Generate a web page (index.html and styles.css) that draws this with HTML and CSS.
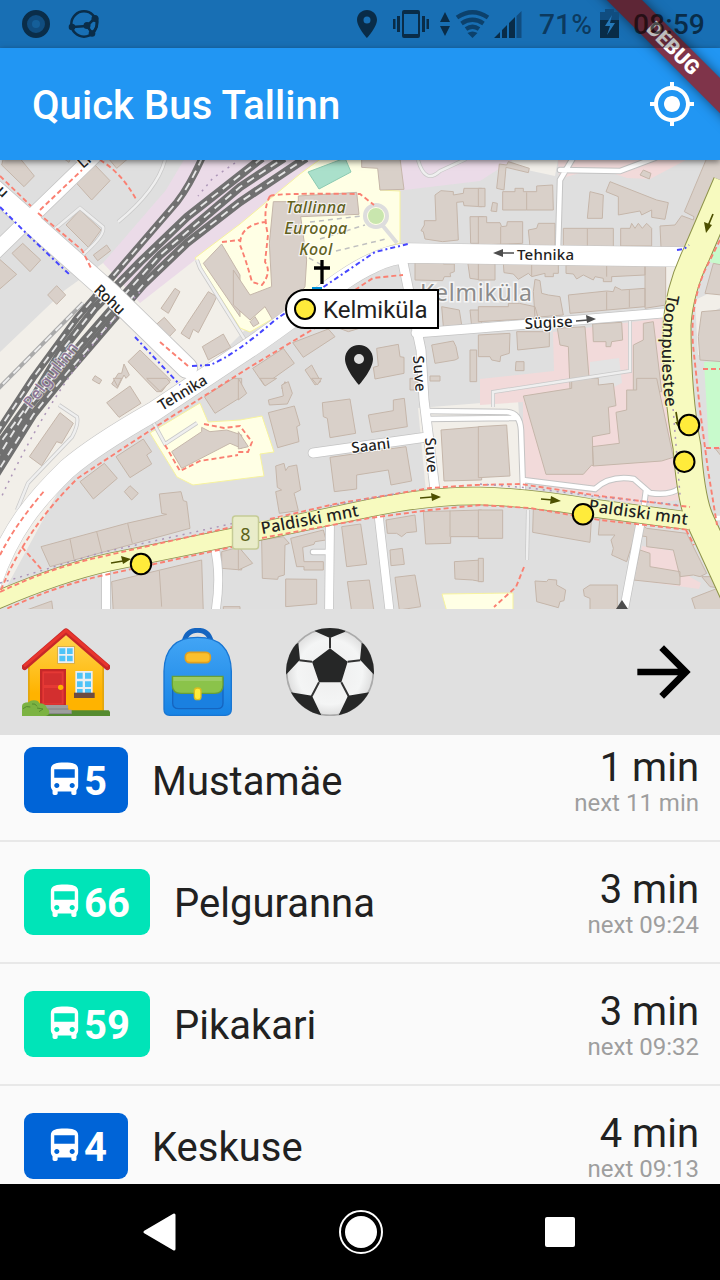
FILE: index.html
```html
<!DOCTYPE html>
<html lang="en">
<head>
<meta charset="utf-8">
<title>Quick Bus Tallinn</title>
<link rel="stylesheet" href="styles.css">
</head>
<body>
<div class="phone">
  <div class="status">
    <svg class="status-left" width="102" height="48" viewBox="0 0 102 48">
      <circle cx="36" cy="24" r="11.500" fill="#104d80" stroke="#0a2d49" stroke-width="5"/>
      <circle cx="36" cy="24" r="4" fill="#155f99"/>
      <g fill="none" stroke="#0a2d49" stroke-width="2.500"><circle cx="84" cy="24" r="12.700"/><path d="M72 27l15-1 8-8M87 26l5 7M97 18q2 9-5 15"/></g>
      <g fill="#0a2d49"><circle cx="72" cy="27" r="3.300"/><circle cx="87" cy="25.500" r="3.500"/><circle cx="95" cy="18.500" r="3.500"/><circle cx="92" cy="33.500" r="3.300"/></g>
    </svg>
    <svg class="status-mid" width="180" height="48" viewBox="350 0 180 48">
      <g fill="#000" fill-opacity=".6">
        <path fill-rule="evenodd" d="M367 10c-5.500 0-10 4.300-10 9.700 0 7.300 10 18.300 10 18.300s10-11 10-18.300c0-5.400-4.500-9.700-10-9.700zm0 13.500a3.500 3.500 0 110-7 3.500 3.500 0 010 7z"/>
        <path fill-rule="evenodd" d="M404 10h14q2 0 2 2v24q0 2-2 2h-14q-2 0-2-2V12q0-2 2-2zm0 4v20h14V14z"/>
        <path d="M393 19h2.500v10H393zM397 16h3v16h-3zM422 16h3v16h-3zM426.500 19h2.500v10h-2.500zM440 22l5-10 5 10zM440 26h10l-5 10z"/>
        <path d="M494 38l6-6v6zM502 30l5-5v13h-5zM509 23l6-6v21h-6z"/>
      </g>
      <path d="M516.500 16l5-5v27h-5z" fill="#104d80"/>
      <g fill="none" stroke="#0c416c" stroke-width="4.300"><path d="M457 17.500q15.500-10.500 31 0M461.500 23.500q11-7.500 22 0M466 29q6.500-4.500 13 0"/></g><path d="M467.500 33q5-3 10 0l-5 5z" fill="#0c416c"/>
    </svg>
    <span class="battery">71%</span>
    <svg class="status-bat" width="20" height="48" viewBox="0 0 20 48"><path d="M0 12h5V9h9v3h5v8H0z" fill="#104d80"/><path d="M0 20h19v18H0z" fill="#082c48"/><path d="M12 15L5 26h5L7 35l8-12h-5z" fill="#2579b9"/></svg>
    <span class="clock">08:59</span>
  </div>

  <header class="appbar">
    <h1>Quick Bus Tallinn</h1>
    <svg width="48" height="48" viewBox="0 0 24 24" fill="#fff"><path d="M12 8c-2.210 0-4 1.790-4 4s1.790 4 4 4 4-1.790 4-4-1.790-4-4-4zm8.940 3c-.46-4.170-3.770-7.480-7.940-7.940V1h-2v2.060C6.830 3.520 3.520 6.830 3.060 11H1v2h2.060c.46 4.170 3.770 7.480 7.940 7.940V23h2v-2.060c4.170-.46 7.480-3.770 7.940-7.940H23v-2h-2.060zM12 19c-3.870 0-7-3.130-7-7s3.130-7 7-7 7 3.130 7 7-3.130 7-7 7z"/></svg>
  </header>
  <div class="ribbon-clip"><div class="ribbon">DEBUG</div></div>

  <main class="map">
    <svg class="tiles" width="720" height="449" viewBox="0 160 720 449">
      <defs>
        <path id="tehnika" d="M-8 582C10 530 35 500 67 469Q95 445 153 412L240 354C300 315 340 277 373 263Q390 254 410 253L540 255 690 257"/>
        <path id="paldiski" d="M-5 601Q60 573 110 562L233 537L370 508Q433 495 480 496T593 508L690 521"/>
        <path id="toom" d="M727 183L697 253Q679 290 677 325Q677 395 687 447Q691 500 700 520L738 603"/>
        <path id="r1" d="M202 158Q190 185 177 202L133 253L77 318L33 378L-5 436"/>
        <path id="r2" d="M262 158L187 217L140 262L95 308L60 353L35 395L-5 450"/>
        <path id="r3" d="M284 158L240 187L160 255L117 303L83 342L30 405L-5 462"/>
        <path id="r4" d="M306 158L240 202L187 243L143 285L110 323L67 373L33 415L-5 476"/>
        <path id="toomlabel" d="M668 294Q657 345 666 410"/>
      </defs>
      <rect y="160" width="720" height="449" fill="#dfdfdf"/>
      <g fill="#f2efe9">
        <path d="M0 352L65 290 103 263 200 255 245 330 200 375 70 470 5 590 0 590z"/>
        <path d="M418 408L518 400 524 488 426 492z"/>
        <path d="M509 160h49l-3 16-28-6zM666 265h14l-11 40 -4 5zM655 320l14-5v80l-6-5zM695 300l25-12v20l-10 5v42h-12z"/>
      </g>
      <path d="M185 158L166 190 103 263 140 303 195 260 240 230 325 158zM386 158l10 33 84-10 36-23z" fill="#ebdbe8"/>
      <path d="M195 258L240 224 300 174 322 158H380V190L400 191V243Q375 248 335 282L250 332 240 328zM150 433L200 403 208 422 240 420 262 416 274 452 260 454 264 476 193 485 177 477zM442 594L513 593V612H447z" fill="#ffffe5" stroke="#f7f39e"/>
      <g fill="#f2dada">
        <path d="M558 160h128l-36 19-23-1-30-10-38 11zM553 332L663 318 668 400 680 500 640 505 523 482V402L480 405V379L554 371zM642 546L674 551 690 577 701 583 699 589 635 580z"/>
      </g>
      <path d="M712 252l8-6v20l-10-4zM704 362l16-1v85l-11 2z" fill="#c8facc"/>
      <path d="M308 172L345 158 351 172 319 189z" fill="#aae0cb" stroke="#8ccab2"/>
      <path d="M590 362l29-4 3 25-14 7-18-6z" fill="#e3e3e3"/>

      <!-- buildings -->
      <g class="b" transform="translate(0 160) scale(.33333)">
        <path d="M10 -5L60 -5 103 48 72 80 5 15zM285 15L330 62 275 120 230 70zM190 -5h22l-5 12zM325 -5h60L350 25zM240 150L303 210 265 262 198 195zM320 255L332 272 293 302 280 285zM68 250L122 300 90 335 36 280zM-10 290L50 343 -10 395zM170 377L197 405 170 433 143 405zM525 385L540 395 505 460 483 445zM625 395L650 410 640 432 595 518 580 508 568 537 543 520 560 493zM493 472L527 510 503 535 465 497zM670 522L692 562 625 600 607 560zM420 570L512 660 485 695H470L384 605zM372 612L388 645 378 655 372 645 352 685 335 672 355 640 365 640zM285 647L305 660 298 672 277 660zM665 252L720 345V470L610 310z"/>
      </g>
      <g class="b" transform="translate(240 160) scale(.33333)">
        <path d="M100 125H175V108L350 97 357 163 182 170 200 300 195 380 140 455 98 480 75 440 30 480 -20 435V330L30 405 95 380 88 250zM365 -5H480L492 88 420 90 413 25 365 22zM603 92L640 95 640 105 670 100 672 85 725 85V140L672 137 670 125 650 127 655 240 608 245 555 237 550 215 543 212 553 195 553 182 588 182 585 105zM690 170h40v80h-38zM525 300L610 303V312H643V335L630 340 632 350 613 350 608 362 525 360zM683 305H725V360L690 355zM130 565L163 610 72 675 38 625zM265 507L285 530 190 592 158 548zM605 440L658 450 665 495 610 500zM690 450h35v50h-30zM410 565L475 553 480 590 492 592 492 640 405 657 400 622 415 618zM575 555L640 543 648 560 655 595 645 600 585 610zM690 570h20v95h-20zM215 615L242 665 225 675 195 630zM135 665L150 685H125zM510 655h30v35h-30zM570 648h30v15h-30zM45 470L57 490 40 500 30 485zM285 500h90l-50 15z"/>
      </g>
      <g class="b" transform="translate(480 160) scale(.33333)">
        <path d="M85 5L148 25 145 38 78 22 72 90 50 85 58 12 80 15zM-5 85H15V140H-5zM68 95H105V85H130V95H170V78L218 75 220 150H140 68zM140 97V150M38 127L52 130 50 155 33 153zM330 95L370 105 367 175 322 175zM390 65L530 120 565 128 555 178 515 172 515 150 485 165 480 153 415 165 415 110 378 95zM490 30L513 40 508 57 480 45zM680 -5H730V40L620 265 543 262 540 198 585 195 605 167 640 180 642 170 613 155zM-5 170H20V188H60L65 200 80 198 82 185H128V250L-5 255zM62 200V252M145 210L170 205 175 190 225 190V260H150zM250 205H400V260H250zM322 205V260M422 205H450L455 190 465 205 475 190 487 205 500 190 515 205V258H422zM-5 305H45V360H-5zM70 310H235V340H220V350H195V340L155 350 145 340 115 358 100 342 72 338zM155 312V348M380 315V350M380 395V450M448 388V442M258 315H495V345L395 350V365H370V355L345 350 340 360 310 345 290 357 280 342 258 340zM495 315L557 318V435L495 445zM165 358L180 362 185 400 205 405 240 410 250 465 165 472 160 395zM-5 440H85V430H118L165 440 175 475 -5 485zM265 405L380 393 400 395 405 380 425 390 495 385V440L270 460zM-5 525L90 520 88 580 62 588 60 605 35 600 30 590 -5 590zM110 515L208 515V560L113 570zM108 605H132V632H106zM232 505L315 500 330 690H270L265 560 240 555zM338 492L425 487 428 540 395 545 392 560H378V545L340 545zM490 490L520 485 545 695H460V555L490 540zM725 315L700 310 675 400 725 405zM665 455L725 450V605L660 600 655 530z"/>
      </g>
      <g class="b" transform="translate(0 380) scale(.33333)">
        <path d="M390 18L423 70 357 112 320 68zM340 -5h25l-12 25zM440 -5h60l10 12-30 27zM180 98L220 130 185 190 170 185 125 257 88 230zM700 -5H725V50L645 100 613 50zM430 177L455 215 440 225 455 252 390 293 348 230zM313 250L352 295 280 357 240 305zM390 317L415 340 395 360 373 335zM515 215L605 155V142L630 155 680 150 725 165V205L690 190 545 265zM478 342L543 335 550 362 560 365 570 445 150 560 123 500 380 430 500 403 485 400zM210 477L222 537M290 455L305 515M383 430L397 490M335 605L605 540 610 700H340zM478 572L485 680M80 690L155 663 160 700H80zM665 515L725 500V570L665 565zM670 680h50v20h-50z"/>
      </g>
      <g class="b" transform="translate(240 380) scale(.33333)">
        <path d="M-5 -5L20 40 -5 60zM60 -5h50L75 18zM215 -5h30L232 15zM145 5L157 40 142 72 88 75 85 60 130 48 125 15zM85 98L163 78 180 135 170 140 177 185 113 203zM247 68L330 57 347 160 270 173 262 115 250 110zM460 60L493 55 502 140 395 157 385 105 460 92zM-5 155L25 200-5 207zM603 150L725 140V300L612 303zM270 232L498 200 515 303 453 315 445 270 350 285V327L283 335zM107 258L132 250 137 272 145 260 170 255 182 330 162 340 165 350 175 392 118 400 107 335 125 330 112 322zM-5 500L38 550-5 570zM65 480L130 470 148 490 135 495 133 585 115 590 113 598 67 595zM152 475L250 450 258 480 225 485 222 493 188 502 192 545 250 545V570H192V560L170 560zM137 597L230 598 230 672 137 680zM305 440L362 432 380 553 320 560zM438 420L525 405 530 455 500 458 485 470 470 460 442 460zM550 395L725 390V470L632 470V490L557 492zM630 392V470M450 510L487 505 493 553 453 557zM465 592L525 585 542 680 478 690zM322 605L388 600 402 695H335zM643 545L725 540V605L697 600 645 597z"/>
      </g>
      <g class="b" transform="translate(480 380) scale(.33333)">
        <path d="M130 48L275 25V-5H355V15L400 10 408 77 385 82 390 160 337 170 340 258 335 255 310 283 198 283zM470 -5H530L580 232 545 243 340 258 337 200 418 190 408 97 440 90V30H470zM-5 140L80 135 90 288 -5 293zM-5 390H68V475H-5zM160 385L335 405 330 487 158 457zM360 410L475 425 500 445 620 460 680 580 660 590 640 585 600 590 580 510 500 500V470L465 465 440 545 395 525 400 505 393 480 405 465 355 465zM480 510L510 520V560L600 575V615L460 600zM-5 535H10V605H-5zM165 603L200 605 205 598 230 600V615L257 630 252 662 240 665 235 683 170 665zM310 628L330 615H412V690H330V655L313 648zM635 655L725 620V700H650zM665 590L725 590V625L690 620zM705 205h20v25z"/>
      </g>
      <circle cx="376" cy="216" r="8" fill="#c9e6ae"/>

      <!-- footpaths -->
      <g fill="none" stroke="#c9c9c9" stroke-width="4"><path d="M55 229L80 208 103 227Q106 235 80 257M165 160Q157 190 118 222M197 260l3 8 45 72M59 405l18 12q2 7-5 20L28 483 17 510M153 422l12 22 32-21M493 407V392l65-10 72-11V321M528 510l-1 50M418 160q7 25 22 11l26-12"/></g>
      <g fill="none" stroke="#efefef" stroke-width="2.500"><path d="M55 229L80 208 103 227Q106 235 80 257M165 160Q157 190 118 222M197 260l3 8 45 72M59 405l18 12q2 7-5 20L28 483 17 510M153 422l12 22 32-21M493 407V392l65-10 72-11V321M528 510l-1 50M418 160q7 25 22 11l26-12"/></g>
      <circle cx="376" cy="216" r="11" fill="none" stroke="#ddd" stroke-width="4"/><path d="M383 226l14 17" stroke="#ddd" stroke-width="4"/>
      <g fill="none" stroke="#c0c0c0" stroke-width="1.500" stroke-dasharray="5 4"><path d="M310 222l52-6M320 239l45-14M336 251l50-12M309 258l22 12"/></g>

      <!-- railway -->
      <path d="M83 303L-5 392" stroke="#aaa" stroke-width="4"/><path d="M83 303L-5 392" stroke="#eee" stroke-width="2" stroke-dasharray="9 6"/>
      <g fill="none" stroke="#707070" stroke-width="8.300"><use href="#r1" stroke-width="7"/><use href="#r2"/><use href="#r3"/><use href="#r4"/></g>
      <g class="ties"><use href="#r1"/><use href="#r2"/><use href="#r3" stroke-dashoffset="6"/><use href="#r4" stroke-dashoffset="3"/></g>
      <path d="M140 292Q60 370 0 500M235 163l-22 15-15 18" class="tram"/>

      <!-- roads -->
      <g fill="none" stroke="#c4c4c4" stroke-linecap="round">
        <path stroke-width="16" d="M-5 252L30 218 95 155"/>
        <path stroke-width="22" d="M-8 188L110 293 187 368"/>
        <path stroke-width="10.500" d="M402 258L421 350 424 400 435 490M416 333L480 328 663 313M313 453L427 437"/>
        <path stroke-width="9.500" d="M330 520L329 615M378 510L390 615M106 570V615M214 545Q222 575 215 615M641 520L623 615"/>
        <path stroke-width="6.500" d="M558 250L560 180 573 158M560 170L620 171 655 158M426 411L507 412Q520 413 521 430L523 490M426 419L515 418M523 480L595 489Q610 475 634 479L650 493Q670 496 680 488M646 490L642 520M313 552H328"/>
        <use href="#tehnika" stroke-width="20.500"/>
      </g>
      <g fill="none" stroke="#fff" stroke-linecap="round">
        <path stroke-width="14.500" d="M-5 252L30 218 95 155"/>
        <path stroke-width="20.500" d="M-8 188L110 293 187 368"/>
        <path stroke-width="9" d="M402 258L421 350 424 400 435 490M416 333L480 328 663 313M313 453L427 437"/>
        <path stroke-width="8" d="M330 520L329 615M378 510L390 615M106 570V615M214 545Q222 575 215 615M641 520L623 615"/>
        <path stroke-width="4.500" d="M558 250L560 180 573 158M560 170L620 171 655 158M426 411L507 412Q520 413 521 430L523 490M426 419L515 418M523 480L595 489Q610 475 634 479L650 493Q670 496 680 488M646 490L642 520M313 552H328M705 518h15"/>
        <use href="#tehnika" stroke-width="19.500"/>
      </g>
      <g fill="none" stroke="#8e9349"><use href="#paldiski" stroke-width="18.500"/><use href="#toom" stroke-width="29"/></g>
      <g fill="none" stroke="#f7fabf"><use href="#paldiski" stroke-width="17"/><use href="#toom" stroke-width="27"/></g>

      <!-- pavements and cycle tracks -->
      <path class="walk" d="M0 176L31 206M38 213L82 250 92 270M40 210L82 170M100 160Q122 173 137 201M160 342L188 366M0 555Q15 525 45 490M1 590Q25 530 78 478L160 424 250 367 320 325M355 290l18-12 30-3M0 592Q50 568 100 557L232 527M270 519L335 504 430 488 475 485 520 484 600 496 690 507M0 612Q50 588 100 576L232 547M262 538L370 518 430 510 480 505 530 508 600 520 690 530M22 547l20 23M165 445l15 26 20-10 38-6M204 424l20 4 16-2 12 16-4 10-10 0M270 196Q275 193 360 194L374 205M270 196Q262 210 268 235L265 262Q272 272 262 285L252 282Q246 260 240 245 240 225 265 222M222 242L240 240M720 240L705 270Q690 305 693 345L700 410 708 470 717 525M703 369h17M706 448h14M686 530l8 15M524 567l-8 20-22 20"/>
      <path class="cycle" d="M0 207L28 235 70 275M135 337L180 385M192 366L210 365Q235 355 275 320L322 288 375 252 408 244M677 250l7-1 5-4"/>
      <path class="tram" d="M0 583L100 553 235 523M330 506L400 493M480 484L530 488 600 497 680 505M672 395L680 495"/>

      <!-- one-way arrows -->
      <g stroke="#4d4d4d" stroke-width="1.700" fill="#4d4d4d"><path d="M514 253h-13M576 321l12-1"/><path stroke="none" d="M493 253l10-4v8zM596 319l-10-4 1 8zM622 600l-6 9h12z"/></g>
      <g stroke="#4d5000" stroke-width="1.700" fill="#4d5000"><path d="M111 563l12-2M420 498l12-1M541 499l12 1M713 214l-5 12M676 412l2 12"/><path stroke="none" d="M131 559l-10-3 2 8zM441 497l-10-4 1 8zM561 501l-10-5-1 8zM706 233l-2-11 8 3zM680 430l-5-8h6z"/></g>

      <!-- labels -->
      <g class="label">
        <text x="517" y="260" textLength="57">Tehnika</text>
        <text transform="translate(525 329) rotate(-3)" textLength="48">Sügise</text>
        <text transform="translate(413 356) rotate(86)" textLength="36">Suve</text>
        <text transform="translate(425 438) rotate(86)" textLength="35">Suve</text>
        <text transform="translate(352 453) rotate(-7)" textLength="39">Saani</text>
        <text transform="translate(162 411) rotate(-31)" textLength="54">Tehnika</text>
        <text transform="translate(93 291) rotate(43)" textLength="36">Rohu</text>
        <text transform="translate(83 169) rotate(-42)">Li</text>
        <text transform="translate(-4 192) rotate(43)">u</text>
      </g>
      <g class="label primary">
        <text transform="translate(262 534) rotate(-10.500)" textLength="99">Paldiski mnt</text>
        <text transform="translate(588 511) rotate(8)" textLength="100">Paldiski mnt</text>
        <text><textPath href="#toomlabel" textLength="114">Toompuiestee</textPath></text>
      </g>
      <text class="station" transform="translate(31 409) rotate(-52)" textLength="78">Pelgulinn</text>
      <g class="school"><text x="316" y="213">Tallinna</text><text x="316" y="234">Euroopa</text><text x="316" y="255">Kool</text></g>
      <text class="district" x="420" y="301" textLength="112">Kelmiküla</text>
      <rect x="232.500" y="516" width="26" height="33" rx="3" fill="#e9ecc9" stroke="#c5cb96" stroke-width="1.500"/>
      <text class="shield" x="245.500" y="541">8</text>
      <path d="M322 260v24M314 268h16" stroke="#000" stroke-width="3.300"/>
      <path d="M312 287h10v4h-10z" fill="#0092da"/>

      <!-- stops -->
      <g fill="#ffeb3b" stroke="#000" stroke-width="2"><circle cx="141" cy="564" r="10.200"/><circle cx="689" cy="425" r="10.200"/><circle cx="684.300" cy="461.700" r="10.200"/><circle cx="583" cy="514.300" r="10.200"/></g>
      <path fill-rule="evenodd" fill="#212121" d="M359 345c-7.800 0-14 6.200-14 14 0 10.500 14 26 14 26s14-15.500 14-26c0-7.800-6.200-14-14-14zm0 19a5 5 0 110-10 5 5 0 010 10z"/>
    </svg>
    <div class="stop"><i></i><span>Kelmiküla</span></div>
  </main>

  <nav class="places">
    <svg class="house" width="88" height="88" viewBox="0 0 264 264">
      <defs><linearGradient id="wall" x2="0" y2="1"><stop offset="0" stop-color="#ffd54f"/><stop offset=".75" stop-color="#ffb300"/></linearGradient><linearGradient id="bag" x2="0" y2="1"><stop offset="0" stop-color="#42a5f5"/><stop offset="1" stop-color="#1783e4"/></linearGradient></defs>
      <path d="M18 110L132 20 246 110V254H18z" fill="url(#wall)"/><path d="M18 115h5v135h-5zM241 115h5v135h-5z" fill="#e2a610"/>
      <path d="M8 117L132 10 256 117" fill="none" stroke="#c62828" stroke-width="18" stroke-linecap="round" stroke-linejoin="round"/><path d="M9 112L132 7 255 112" fill="none" stroke="#e8352d" stroke-width="9" stroke-linecap="round" stroke-linejoin="round"/>
      <path d="M105 54h54v54h-54z" fill="#d9b04a"/><path d="M108 57h48v48h-48z" fill="#eceff1"/><path d="M112 61h18v17h-18zM135 61h17v17h-17zM112 83h18v17h-18zM135 83h17v17h-17z" fill="#4fc3f7"/>
      <path d="M54 123h78v111H54z" fill="#c62828"/><path d="M61 130h64v100H61z" fill="#e53935"/><path d="M66 136h53v35H66zM66 180h53v46H66z" fill="#d32f2f"/><circle cx="116" cy="178" r="8" fill="#ffb300"/>
      <path d="M160 129h52v67h-52z" fill="#eceff1"/><path d="M165 134h17v18h-17zM189 134h18v18h-18zM165 160h17v17h-17zM189 160h18v17h-18zM165 183h17v12h-17zM189 183h18v12h-18z" fill="#4fc3f7"/><path d="M156 194h62v16h-62z" fill="#6d4c41"/>
      <path d="M0 247h260l4 4v13H0z" fill="#558b2f"/><path d="M65 231h73v14H65zM70 245h79v13H70z" fill="#9e9e9e"/><path d="M65 243h75M75 257h75" stroke="#777" stroke-width="2"/>
      <path d="M0 264V235q0-12 20-12 5-7 17-6 12 0 15 9 19 0 23 15 7 3 7 12-1 9-11 11z" fill="#7cb342"/><path d="M3 242q10-10 22-5M30 228q10-3 15 7M45 240l18 3-12 8" fill="none" stroke="#558b2f" stroke-width="3"/>
    </svg>
    <svg class="bag" width="70" height="88" viewBox="0 0 210 264">
      <path d="M62 50Q67 7 104 7t42 43" fill="none" stroke="#1565c0" stroke-width="15"/>
      <path d="M3 130Q5 28 104 28T205 130V244q0 18-18 18H20Q3 262 3 244z" fill="url(#bag)" stroke="#1976d2" stroke-width="4"/>
      <rect x="67" y="73" width="75" height="31" rx="13" fill="#fbc02d" stroke="#e0a020" stroke-width="5"/>
      <path d="M29 150H180V225q0 17-17 17H47q-18 0-18-17z" fill="#1a80e0" stroke="#1565c0" stroke-width="4"/>
      <path d="M28 145H180v26q0 25-25 25H54q-26 0-26-25z" fill="#8bc34a" stroke="#679f38" stroke-width="4"/><path d="M32 147h144v12H32z" fill="#9ccc65"/>
      <rect x="94" y="180" width="20" height="35" rx="9" fill="#ffeb3b" stroke="#d9bd20" stroke-width="4"/>
    </svg>
    <svg class="ball" width="88" height="88" viewBox="0 0 264 264">
      <defs><clipPath id="disc"><circle cx="132" cy="132" r="132"/></clipPath><radialGradient id="white"><stop offset="0" stop-color="#ededed"/><stop offset=".75" stop-color="#f4f5f5"/><stop offset="1" stop-color="#dedede"/></radialGradient></defs>
      <circle cx="132" cy="132" r="130" fill="url(#white)" stroke="#aaa" stroke-width="5"/>
      <g clip-path="url(#disc)"><path d="M132 61L185 101 166 163H99L78 101zM80 0h104l-8 12q-20 8-44 18-27-11-45-20zM37 45l5 50-42 45V60zM227 45l-5 50 42 45V60zM14 193l64 10 29 61H10zM250 193l-64 10-29 61h97z" fill="#262727"/><path d="M132 61V28M78 101L40 97M185 101l38-4M99 163l-22 42M166 163l22 42" stroke="#333" stroke-width="6"/></g>
    </svg>
    <svg class="go" width="80" height="80" viewBox="0 0 24 24"><path d="M12 4l-1.410 1.410L16.170 11H4v2h12.170l-5.580 5.590L12 20l8-8z"/></svg>
  </nav>

  <svg width="0" height="0" class="sprite"><symbol id="bus" viewBox="0 0 24 24"><path fill="#fff" d="M4 16c0 .88.39 1.670 1 2.220V20c0 .55.45 1 1 1h1c.55 0 1-.45 1-1v-1h8v1c0 .55.45 1 1 1h1c.55 0 1-.45 1-1v-1.780c.61-.55 1-1.340 1-2.220V6c0-3.500-3.580-4-8-4s-8 .5-8 4v10zm3.500 1c-.83 0-1.500-.67-1.500-1.500S6.670 14 7.500 14s1.500.67 1.500 1.500S8.330 17 7.500 17zm9 0c-.83 0-1.500-.67-1.500-1.500s.67-1.500 1.500-1.500 1.500.67 1.500 1.500-.67 1.500-1.500 1.500zm1.500-6H6V6h12v5z"/></symbol></svg>
  <section class="departures">
    <div class="row"><div class="line blue"><svg><use href="#bus"/></svg>5</div><div class="dest">Mustamäe</div><div class="when"><b>1 min</b><small>next 11 min</small></div></div>
    <div class="row"><div class="line teal"><svg><use href="#bus"/></svg>66</div><div class="dest">Pelguranna</div><div class="when"><b>3 min</b><small>next 09:24</small></div></div>
    <div class="row"><div class="line teal"><svg><use href="#bus"/></svg>59</div><div class="dest">Pikakari</div><div class="when"><b>3 min</b><small>next 09:32</small></div></div>
    <div class="row"><div class="line blue"><svg><use href="#bus"/></svg>4</div><div class="dest">Keskuse</div><div class="when"><b>4 min</b><small>next 09:13</small></div></div>
  </section>

  <footer class="navbar">
    <svg width="34" height="40" viewBox="0 0 34 40"><path d="M32 3v34L3 20z" fill="#fff" stroke="#fff" stroke-width="3" stroke-linejoin="round"/></svg>
    <svg width="44" height="44" viewBox="0 0 44 44"><circle cx="22" cy="22" r="21" fill="none" stroke="#fff" stroke-width="2"/><circle cx="22" cy="22" r="16" fill="#fff"/></svg>
    <svg width="30" height="30" viewBox="0 0 30 30"><rect width="30" height="30" rx="2" fill="#fff"/></svg>
  </footer>
</div>
</body>
</html>
```
FILE: styles.css
```css
body { margin: 0; }
svg { display: block; flex: none; }
.phone {
  position: relative;
  width: 720px;
  height: 1280px;
  overflow: hidden;
  display: flex;
  flex-direction: column;
  background: #fafafa;
  font-family: Roboto, sans-serif;
  color: #212121;
}
.status {
  position: relative;
  display: flex;
  align-items: center;
  height: 48px;
  flex: none;
  background: #2196f3;
  font-size: 28.300px;
  font-weight: 500;
}
/* the system scrim dims everything beneath it, ribbon included */
.status::before {
  content: "";
  position: absolute;
  inset: 0;
  z-index: 4;
  background: rgba(0, 0, 0, .26);
}
.status > * { position: relative; z-index: 5; }
.status-mid { margin-left: 248px; }
.battery { width: 61px; margin-left: 9px; color: rgba(0, 0, 0, .47); white-space: nowrap; line-height: 52px; padding-top: 1px; }
.clock { margin-left: 13px; color: rgba(0, 0, 0, .6); line-height: 52px; padding-top: 1px; }
.appbar {
  position: relative;
  z-index: 2;
  display: flex;
  align-items: center;
  justify-content: space-between;
  height: 112px;
  flex: none;
  box-sizing: border-box;
  padding: 0 24px 0 32px;
  background: #2196f3;
  box-shadow: 0 2px 6px rgba(0, 0, 0, .5);
}
.appbar h1 { margin: 0; font-size: 40px; letter-spacing: .06px; font-weight: 500; color: #fff; line-height: 48px; padding-top: 4px; }
.ribbon-clip { position: absolute; z-index: 3; top: 0; right: 0; width: 180px; height: 180px; overflow: hidden; }
.ribbon {
  position: absolute;
  left: 13px;
  top: 36px;
  width: 240px;
  height: 24.500px;
  transform: rotate(45deg);
  background: #7f344a;
  box-shadow: 0 0 12px rgba(0, 0, 0, .5);
  color: #fff;
  font-size: 20.400px;
  font-weight: 900;
  line-height: 25px;
  text-align: center;
}
.map { position: relative; height: 449px; flex: none; }
.b { fill: #d9d0c9; stroke: #c5b6aa; stroke-width: 3; }
.ties { fill: none; stroke: #e6e6e6; stroke-width: 1.900; stroke-dasharray: 8 6; }
.walk { fill: none; stroke: #fa8072; stroke-width: 1.900; stroke-dasharray: 5 3; }
.cycle { fill: none; stroke: #4646ff; stroke-width: 2; stroke-dasharray: 5 3 2 3; }
.tram { fill: none; stroke: #ad96b8; stroke-width: 1.500; stroke-dasharray: 2 5; }
.label { font: 500 15px "Noto Sans", sans-serif; fill: #222; stroke: #fff; stroke-width: 2; paint-order: stroke; }
.primary { font-size: 16.500px; stroke: #f7fabf; }
.station { font: 500 16px "Noto Sans", sans-serif; fill: #7a5b87; fill-opacity: .8; stroke: #fff; stroke-opacity: .6; stroke-width: 2; paint-order: stroke; }
.school { font: italic 500 16px "Noto Sans", sans-serif; text-anchor: middle; fill: #62621e; stroke: #fff; stroke-opacity: .7; stroke-width: 2.500; paint-order: stroke; }
.school text { letter-spacing: .4px; }
.district { font: 23px "Noto Sans", sans-serif; fill: #8b8b8b; stroke: #fff; stroke-opacity: .7; stroke-width: 3; paint-order: stroke; }
.shield { font: 18px "Noto Sans", sans-serif; text-anchor: middle; fill: #5d6419; }
.stop {
  position: absolute;
  left: 285px;
  top: 129px;
  width: 154px;
  height: 40px;
  box-sizing: border-box;
  display: flex;
  align-items: center;
  padding-left: 7px;
  gap: 7px;
  border: 2px solid #000;
  border-radius: 20px 0 0 20px;
  background: #fff;
  font-size: 24px;
}
.stop i { width: 18px; height: 18px; border: 2px solid #000; border-radius: 50%; background: #ffeb3b; flex: none; }
.stop span { padding-top: 2px; }
.places { display: flex; align-items: center; height: 126px; flex: none; background: #e0e0e0; }
.house { margin-left: 22px; }
.bag { margin-left: 53px; }
.ball { margin-left: 53px; }
.go { margin-left: auto; margin-right: 16px; }
.sprite { position: absolute; }
.departures { height: 449px; flex: none; overflow: hidden; }
.row {
  display: flex;
  align-items: center;
  box-sizing: border-box;
  height: 122px;
  padding: 0 21px 0 24px;
  border-bottom: 2px solid #e8e8e8;
}
.row:first-child { margin-top: -15px; }
.line {
  display: flex;
  align-items: center;
  height: 66px;
  box-sizing: border-box;
  padding: 2px 19px 0 20px;
  border-radius: 9px;
  color: #fff;
  font-size: 40px;
  font-weight: 700;
}
.line svg { width: 41px; height: 41px; margin: -3px -1px 0 0; }
.blue { width: 104px; background: #0064d7; }
.teal { width: 126px; background: #00e4b8; }
.dest { margin-left: 24px; font-size: 40px; padding-top: 2px; }
.when { margin-left: auto; display: flex; flex-direction: column; align-items: flex-end; }
.when b { font-weight: 400; font-size: 40px; line-height: 46px; padding-top: 1px; }
.when small { font-size: 24px; line-height: 24px; padding-bottom: 2px; color: #9e9e9e; }
.navbar { display: flex; align-items: center; flex: 1; box-sizing: border-box; padding: 0 145px 0 142px; justify-content: space-between; background: #000; }
```
